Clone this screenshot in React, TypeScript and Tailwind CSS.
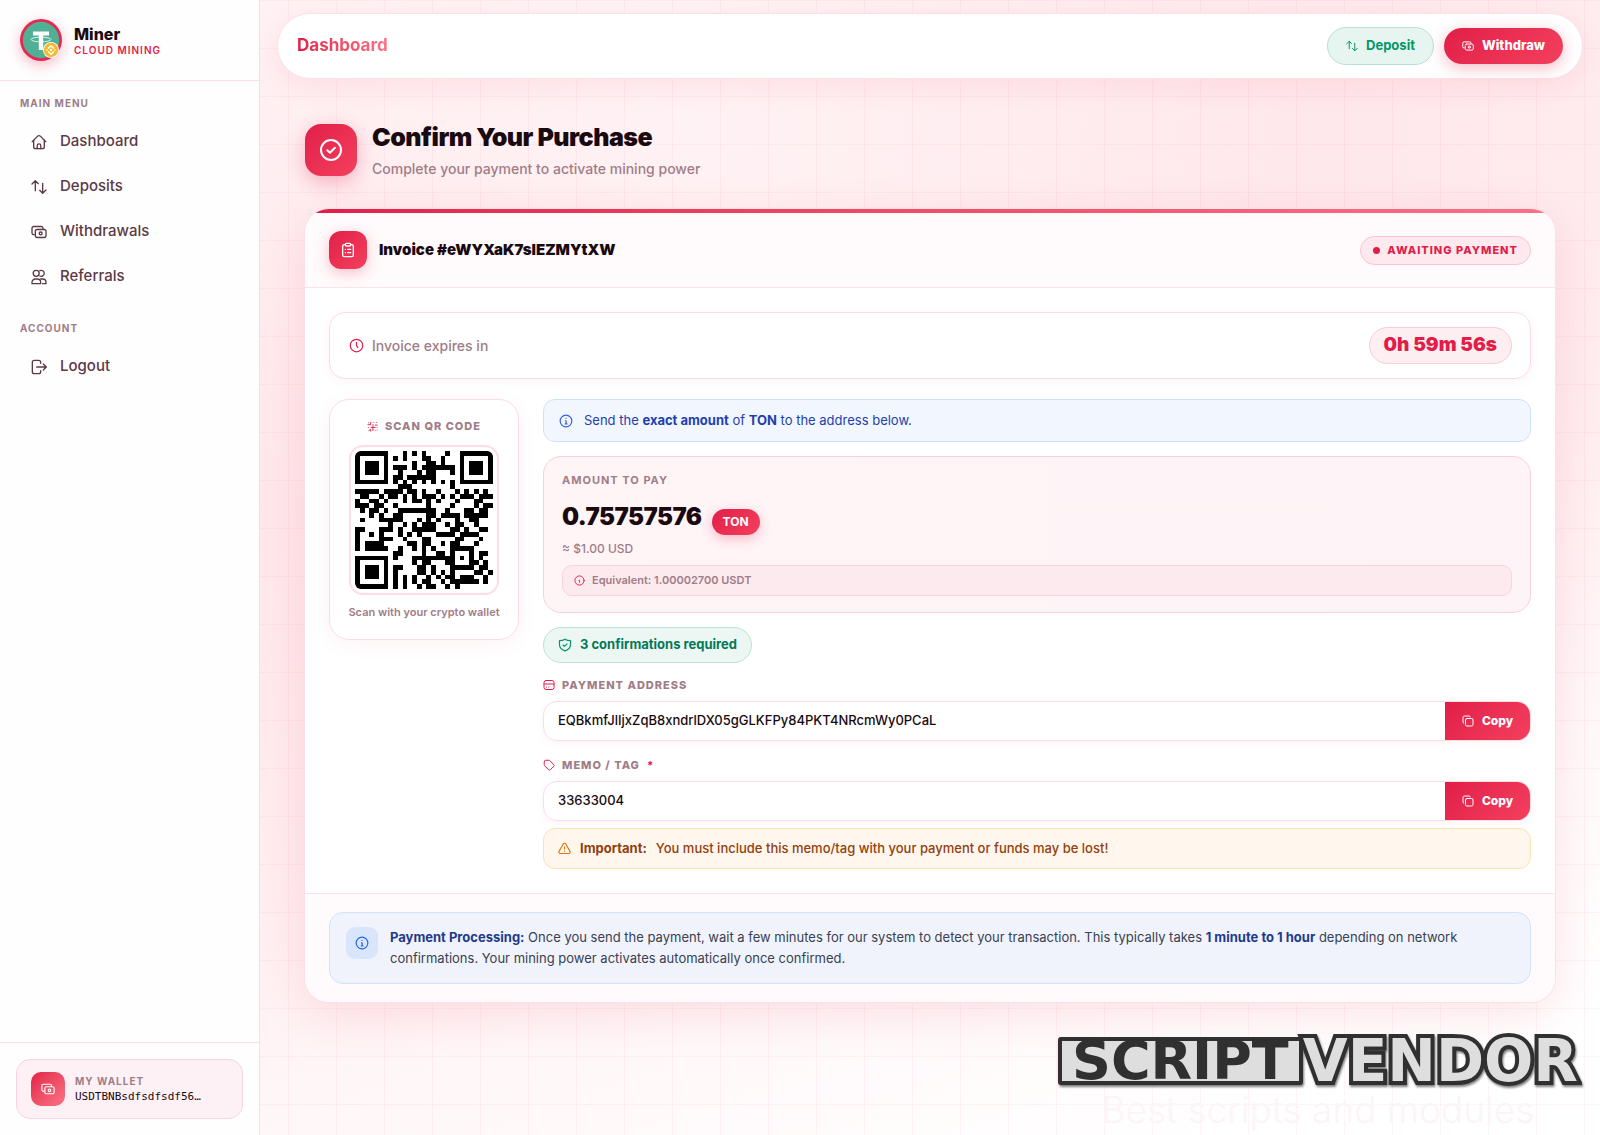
import type { ReactNode, SVGProps } from "react";

const ADDRESS = "EQBkmfJlIjxZqB8xndrlDX05gGLKFPy84PKT4NRcmWy0PCaL";
const MEMO = "33633004";

/* ---------- QR code (version 3, level L, byte mode) ---------- */
const SIZE = 29;
const DATA_WORDS = 55;
const EC_WORDS = 15;

function gfMul(a: number, b: number): number {
  let r = 0;
  for (let i = 7; i >= 0; i--) {
    r = (r << 1) ^ ((r >>> 7) * 0x11d);
    r ^= ((b >>> i) & 1) * a;
  }
  return r;
}

function errorWords(data: number[]): number[] {
  const gen: number[] = new Array(EC_WORDS).fill(0);
  gen[EC_WORDS - 1] = 1;
  let root = 1;
  for (let i = 0; i < EC_WORDS; i++) {
    for (let j = 0; j < EC_WORDS; j++) {
      gen[j] = gfMul(gen[j], root);
      if (j + 1 < EC_WORDS) gen[j] ^= gen[j + 1];
    }
    root = gfMul(root, 2);
  }
  const rem: number[] = new Array(EC_WORDS).fill(0);
  for (const b of data) {
    const f = b ^ (rem.shift() as number);
    rem.push(0);
    gen.forEach((g, i) => (rem[i] ^= gfMul(g, f)));
  }
  return rem;
}

// Mask pattern 2: every third column is inverted.
const MASK = 2;
const masked = (x: number) => x % 3 === 0;

function qrMatrix(text: string): boolean[][] {
  const bits: number[] = [];
  const put = (v: number, n: number) => {
    for (let i = n - 1; i >= 0; i--) bits.push((v >>> i) & 1);
  };
  put(4, 4);
  put(text.length, 8);
  for (const c of text) put(c.charCodeAt(0), 8);
  put(0, 4);
  const words: number[] = [];
  for (let i = 0; i < bits.length; i += 8) words.push(parseInt(bits.slice(i, i + 8).join(""), 2));
  for (let pad = 0xec; words.length < DATA_WORDS; pad ^= 0xec ^ 0x11) words.push(pad);
  const all = words.concat(errorWords(words));

  const m: boolean[][] = Array.from({ length: SIZE }, () => new Array(SIZE).fill(false));
  const fixed: boolean[][] = Array.from({ length: SIZE }, () => new Array(SIZE).fill(false));
  const set = (x: number, y: number, v: boolean) => {
    if (x < 0 || y < 0 || x >= SIZE || y >= SIZE) return;
    m[y][x] = v;
    fixed[y][x] = true;
  };
  for (let i = 0; i < SIZE; i++) {
    set(6, i, i % 2 === 0);
    set(i, 6, i % 2 === 0);
  }
  for (const [cx, cy] of [[3, 3], [SIZE - 4, 3], [3, SIZE - 4]])
    for (let dy = -4; dy <= 4; dy++)
      for (let dx = -4; dx <= 4; dx++) {
        const d = Math.max(Math.abs(dx), Math.abs(dy));
        set(cx + dx, cy + dy, d !== 2 && d !== 4);
      }
  for (let dy = -2; dy <= 2; dy++)
    for (let dx = -2; dx <= 2; dx++) set(22 + dx, 22 + dy, Math.max(Math.abs(dx), Math.abs(dy)) !== 1);

  const fmt = (1 << 3) | MASK;
  let rem = fmt;
  for (let i = 0; i < 10; i++) rem = (rem << 1) ^ ((rem >>> 9) * 0x537);
  const f = ((fmt << 10) | rem) ^ 0x5412;
  const bit = (i: number) => ((f >>> i) & 1) === 1;
  for (let i = 0; i <= 5; i++) set(8, i, bit(i));
  set(8, 7, bit(6));
  set(8, 8, bit(7));
  set(7, 8, bit(8));
  for (let i = 9; i < 15; i++) set(14 - i, 8, bit(i));
  for (let i = 0; i < 8; i++) set(SIZE - 1 - i, 8, bit(i));
  for (let i = 8; i < 15; i++) set(8, SIZE - 15 + i, bit(i));
  set(8, SIZE - 8, true);

  let k = 0;
  for (let right = SIZE - 1; right >= 1; right -= 2) {
    if (right === 6) right = 5;
    for (let v = 0; v < SIZE; v++)
      for (let j = 0; j < 2; j++) {
        const x = right - j;
        const y = ((right + 1) & 2) === 0 ? SIZE - 1 - v : v;
        if (fixed[y][x]) continue;
        const b = k < all.length * 8 ? ((all[k >>> 3] >>> (7 - (k & 7))) & 1) === 1 : false;
        m[y][x] = b !== masked(x);
        k++;
      }
  }
  return m;
}

function QrCode({ text }: { text: string }) {
  const d = qrMatrix(text)
    .flatMap((row, y) => row.map((on, x) => (on ? `M${x} ${y}h1v1h-1z` : "")))
    .join("");
  return (
    <svg viewBox="0 0 29 29" className="block w-full rounded-md" role="img" aria-label="Payment QR code" shapeRendering="crispEdges">
      <path d={d} fill="#000" />
    </svg>
  );
}

/* ---------- Icons ---------- */
type IconProps = SVGProps<SVGSVGElement>;
function Icon({ children, ...p }: IconProps & { children: ReactNode }) {
  return (
    <svg viewBox="0 0 24 24" fill="none" stroke="currentColor" strokeWidth={2} strokeLinecap="round" strokeLinejoin="round" aria-hidden="true" {...p}>
      {children}
    </svg>
  );
}
const HomeIcon = (p: IconProps) => (
  <Icon {...p}>
    <path d="M1.8 11.5 10 3.2a2.8 2.8 0 0 1 4 0l8.2 8.3" />
    <path d="M4 9.5V19a3 3 0 0 0 3 3h10a3 3 0 0 0 3-3V9.500" />
    <path d="M9.300 22v-4.500a2.700 2.700 0 0 1 5.400 0V22" />
  </Icon>
);
const ArrowsIcon = (p: IconProps) => (
  <Icon {...p}>
    <path d="M6.500 17.500V3M1.500 7.500l5-5 4.500 4.500" />
    <path d="M17.500 6.500V21M13 17l4.500 4.500 5-5" />
  </Icon>
);
const CashIcon = (p: IconProps) => (
  <Icon {...p}>
    <path d="M5 16H4.500A2.700 2.700 0 0 1 1.500 13.300V6.500A2.700 2.700 0 0 1 4.200 3.800h11.100A2.700 2.700 0 0 1 18 6.500V7" />
    <rect x="6.500" y="8.200" width="16" height="12" rx="2.800" />
    <circle cx="14.500" cy="14.200" r="2.200" />
  </Icon>
);
const UsersIcon = (p: IconProps) => (
  <Icon {...p}>
    <circle cx="7.800" cy="6.500" r="4.500" />
    <path d="M13.300 2.500a4.500 4.500 0 1 1 0 8" />
    <path d="M1.500 22v-2a5 5 0 0 1 5-5h3a5 5 0 0 1 5 5v2z" />
    <path d="M14.500 15h3a5 5 0 0 1 5 5v2h-5" />
  </Icon>
);
const LogoutIcon = (p: IconProps) => (
  <Icon {...p}>
    <path d="M14.500 6.500V5a3 3 0 0 0-3-3H5a3 3 0 0 0-3 3v14a3 3 0 0 0 3 3h6.500a3 3 0 0 0 3-3v-1.500" />
    <path d="M8.500 12H23M18.500 7.500 23 12l-4.500 4.500" />
  </Icon>
);
const CheckCircleIcon = (p: IconProps) => (
  <Icon {...p}>
    <circle cx="12" cy="12" r="10" />
    <path d="m8.300 12.200 2.600 2.600 5-5" />
  </Icon>
);
const ClipboardIcon = (p: IconProps) => (
  <Icon {...p}>
    <path d="M8 4H6.500A2.500 2.500 0 0 0 4 6.500v13A2.500 2.500 0 0 0 6.500 22h11a2.500 2.500 0 0 0 2.500-2.500v-13A2.500 2.500 0 0 0 17.500 4H16" />
    <rect x="8" y="2" width="8" height="4" rx="1.500" />
    <path d="M8 11h.1M8 16h.1M11.500 11H16M11.500 16H16" />
  </Icon>
);
const ClockIcon = (p: IconProps) => (
  <Icon {...p}>
    <circle cx="12" cy="12" r="10" />
    <path d="M12 7v5l2 3" />
  </Icon>
);
const InfoIcon = (p: IconProps) => (
  <Icon {...p}>
    <circle cx="12" cy="12" r="10" />
    <path d="M11 11.500h1.200V17M10.800 17h2.800M12 7.500v.1" />
  </Icon>
);
const InfoSmallIcon = (p: IconProps) => (
  <Icon {...p}>
    <circle cx="12" cy="12" r="10" />
    <path d="M11 11.500h1.200V16" />
  </Icon>
);
const ScanIcon = (p: IconProps) => (
  <Icon {...p}>
    <path d="M3 4h.1M8 3v5H2M15 3v.1M21 3v.1M13 8v13M9 14h9M18 9h4M3 14v.1M4 21l4-3v4M18 20v.1M22 20v.1M22 14v.1" />
  </Icon>
);
const ShieldIcon = (p: IconProps) => (
  <Icon {...p}>
    <path d="M12 2c2.500 1.600 5.500 2.600 9.500 2.600V11c0 5.500-4 9-9.500 11-5.500-2-9.500-5.500-9.500-11V4.600C6.500 4.600 9.500 3.600 12 2z" />
    <path d="m8.500 12 2.500 2.500 4.500-4.500" />
  </Icon>
);
const CardIcon = (p: IconProps) => (
  <Icon {...p}>
    <rect x="2" y="3" width="20" height="18" rx="4" />
    <path d="M2 10h20M7 16h.1M11.500 16h.1" />
  </Icon>
);
const TagIcon = (p: IconProps) => (
  <Icon {...p}>
    <path d="M2.500 5.500a3 3 0 0 1 3-3h6.200a3 3 0 0 1 2.100.9l7.300 7.400a3 3 0 0 1 0 4.200l-6 6.100a3 3 0 0 1-4.300 0l-7.400-7.500a3 3 0 0 1-.9-2.100z" />
  </Icon>
);
const CopyIcon = (p: IconProps) => (
  <Icon {...p}>
    <rect x="7" y="7" width="15" height="15" rx="3" />
    <path d="M3.500 16.500A2.500 2.500 0 0 1 2 14V5a3 3 0 0 1 3-3h9a2.500 2.500 0 0 1 2.500 1.500" />
  </Icon>
);
const WarnIcon = (p: IconProps) => (
  <Icon {...p}>
    <path d="M9.700 3.500a2.700 2.700 0 0 1 4.600 0l7.800 13.800a2.600 2.600 0 0 1-2.300 3.900H4.200a2.600 2.600 0 0 1-2.300-3.900z" />
    <path d="M12 9v4M12 16.800v.1" />
  </Icon>
);

function BrandLogo() {
  return (
    <span className="rounded-full shadow-[0_4px_14px_rgba(225,29,72,0.3)]">
      <svg viewBox="0 0 42 42" className="block size-[42px]" aria-hidden="true">
        <circle cx="21" cy="21" r="21" fill="#e8274f" />
        <circle cx="21" cy="21" r="18.200" fill="#50af95" />
        <path d="M13 12.500h16v4h-5.800V31h-4.400V16.500H13z" fill="#fff" />
        <ellipse cx="21" cy="20.500" rx="10" ry="2.300" fill="none" stroke="#fff" strokeWidth="0.800" />
        <circle cx="31" cy="31" r="8" fill="#fff" />
        <circle cx="31" cy="31" r="7.200" fill="#f3ba2f" />
        <path d="M28 29.500 31 26.800l3 2.700M28 32.500l3 2.700 3-2.700" fill="none" stroke="#fff" strokeWidth="1.400" />
        <path d="m31 29.400 1.600 1.600-1.600 1.600-1.600-1.600zM27 30l1 1-1 1-1-1zM35 30l1 1-1 1-1-1z" fill="#fff" />
      </svg>
    </span>
  );
}

/* ---------- Pieces ---------- */
function NavItem({ icon, label }: { icon: ReactNode; label: string }) {
  return (
    <a href="#" className="flex h-[45px] items-center gap-[13px] pl-[31px] text-[15px] font-medium text-[#5b3a45]">
      {icon}
      {label}
    </a>
  );
}

function SectionLabel({ children }: { children: ReactNode }) {
  return <h2 className="px-5 text-[10px] leading-4 font-bold tracking-[1px] text-[#9f7d87]">{children}</h2>;
}

function CopyField({ id, value }: { id: string; value: string }) {
  return (
    <div className="flex h-10 overflow-hidden rounded-[14px] border border-[#fcdde4] bg-white shadow-[0_2px_8px_rgba(225,29,72,0.06)]">
      <input id={id} readOnly value={value} className="min-w-0 flex-1 bg-transparent px-[14px] text-[13px] font-medium text-[#1a0a10] outline-none" />
      <button type="button" className="flex w-[85px] items-center justify-center gap-2 bg-linear-135 from-[#e11d48] to-[#f43f5e] text-[12px] font-extrabold text-white">
        <CopyIcon className="size-3" />
        Copy
      </button>
    </div>
  );
}

const labelClass = "flex items-center gap-[7px] text-[11px] leading-4 font-extrabold tracking-[1px] text-[#9f7d87]";

function Sidebar() {
  return (
    <aside className="flex w-[260px] shrink-0 flex-col border-r border-[#fbdde4] bg-[#fefefe]">
      <div className="flex h-[81px] items-center gap-3 border-b border-[#fcdfe6] px-5">
        <BrandLogo />
        <div>
          <div className="text-[16px] leading-5 font-extrabold text-[#1a0a10]">Miner</div>
          <div className="text-[10px] leading-3 font-semibold tracking-[1px] text-[#e11d48]">CLOUD MINING</div>
        </div>
      </div>
      <nav className="flex-1 pt-[14px]">
        <SectionLabel>MAIN MENU</SectionLabel>
        <div className="pt-2 pb-[21px]">
          <NavItem icon={<HomeIcon className="size-4" />} label="Dashboard" />
          <NavItem icon={<ArrowsIcon className="size-4" />} label="Deposits" />
          <NavItem icon={<CashIcon className="size-4" />} label="Withdrawals" />
          <NavItem icon={<UsersIcon className="size-4" />} label="Referrals" />
        </div>
        <SectionLabel>ACCOUNT</SectionLabel>
        <div className="pt-2">
          <NavItem icon={<LogoutIcon className="size-4" />} label="Logout" />
        </div>
      </nav>
      <div className="border-t border-[#fcdfe6] p-4">
        <div className="flex h-[60px] items-center gap-[10px] rounded-[14px] border border-[#fad3de] bg-[#fdf1f5] px-[14px]">
          <span className="flex size-[34px] items-center justify-center rounded-[10px] bg-linear-135 from-[#e11d48] to-[#fb7185] text-white">
            <CashIcon className="size-[14px]" />
          </span>
          <div>
            <div className="text-[10px] leading-[15px] font-bold tracking-[1px] text-[#9f7d87]">MY WALLET</div>
            <div className="font-['DejaVu_Sans_Mono',monospace] text-[11px] leading-[15px] text-[#1a0a10]">USDTBNBsdfsdfsdf56…</div>
          </div>
        </div>
      </div>
    </aside>
  );
}

function Topbar() {
  return (
    <header className="mx-[17px] mt-[13px] flex h-[66px] items-center justify-between rounded-full border border-[#fce0e6] bg-white px-[19px] shadow-[0_8px_30px_rgba(225,29,72,0.08)]">
      <h1 className="bg-linear-90 from-[#e11d48] to-[#fb7185] bg-clip-text text-[17px] font-bold text-transparent">Dashboard</h1>
      <div className="flex items-center gap-[10px]">
        <a href="#" className="flex h-[38px] items-center gap-2 rounded-full border border-[#b5e2d0] bg-[#e7f5f0] px-[18px] text-[13px] font-bold text-[#059669]">
          <ArrowsIcon className="size-3" />
          Deposit
        </a>
        <a href="#" className="flex h-9 items-center gap-2 rounded-full bg-linear-135 from-[#e11d48] to-[#f43f5e] px-[18px] text-[13px] font-extrabold text-white shadow-[0_4px_16px_rgba(225,29,72,0.3)]">
          <CashIcon className="size-3" />
          Withdraw
        </a>
      </div>
    </header>
  );
}

function QrCard() {
  return (
    <section className="flex h-[241px] w-[190px] shrink-0 flex-col items-center rounded-[20px] border border-[#fcdde4] bg-white pt-[18px] shadow-[0_4px_20px_rgba(225,29,72,0.06)]">
      <h3 className={labelClass}>
        <ScanIcon className="size-[11px] text-[#e11d48]" />
        SCAN QR CODE
      </h3>
      <div className="mt-[11px] w-[150px] rounded-[14px] border-2 border-[#fcdde4] bg-white p-[4px]">
        <QrCode text={ADDRESS} />
      </div>
      <p className="pt-[9px] text-[11px] leading-4 font-semibold text-[#9f7d87]">Scan with your crypto wallet</p>
    </section>
  );
}

function AmountCard() {
  return (
    <section className="mt-[14px] rounded-[18px] border border-[#fad0da] bg-linear-90 from-[#fff4f6] to-[#fef4f7] px-[18px] pt-[15px] pb-4">
      <h3 className="text-[11px] leading-4 font-bold tracking-[1px] text-[#9f7d87]">AMOUNT TO PAY</h3>
      <div className="flex h-[47px] items-end gap-[10px]">
        <span className="text-[24px] leading-9 font-black tracking-[-0.500px] text-[#1a0a10]">0.75757576</span>
        <span className="flex h-[26px] items-center rounded-full bg-linear-135 from-[#e11d48] to-[#f43f5e] px-[11px] text-[12px] font-bold text-white shadow-[0_4px_12px_rgba(225,29,72,0.25)]">TON</span>
      </div>
      <p className="pt-1 text-[12px] leading-5 font-medium text-[#9f7d87]">≈ $1.00 USD</p>
      <div className="mt-[6px] flex h-[31px] items-center gap-[7px] rounded-[10px] border border-[#fad3dc] bg-[#fdeaee] px-[11px] text-[11px] font-semibold text-[#9f7d87]">
        <InfoSmallIcon className="size-[11px] text-[#e11d48]" />
        Equivalent: 1.00002700 USDT
      </div>
    </section>
  );
}

function InvoiceCard() {
  return (
    <article className="mt-[33px] overflow-hidden rounded-3xl bg-white shadow-[0_12px_48px_rgba(225,29,72,0.12)] ring-1 ring-[#fbe1e7]">
      <div className="h-1 bg-linear-90 from-[#e11d48] to-[#fb7185]" />
      <header className="flex h-[75px] items-center justify-between border-b border-[#fce3e9] bg-[#fffafb] px-6">
        <div className="flex items-center gap-3">
          <span className="flex size-[38px] items-center justify-center rounded-[12px] bg-linear-135 from-[#e11d48] to-[#f43f5e] text-white shadow-[0_4px_14px_rgba(225,29,72,0.25)]">
            <ClipboardIcon className="size-4" />
          </span>
          <h2 className="text-[15px] font-black text-[#1a0a10]">Invoice #eWYXaK7sIEZMYtXW</h2>
        </div>
        <span className="flex h-[29px] items-center gap-[7px] rounded-full border border-[#f8c4d0] bg-[#fde9ee] px-3 text-[11px] font-extrabold tracking-[1px] text-[#e11d48]">
          <i className="size-[7px] rounded-full bg-[#e11d48]" />
          AWAITING PAYMENT
        </span>
      </header>

      <div className="p-6">
        <div className="flex h-[67px] items-center justify-between rounded-[16px] border border-[#fcdde4] bg-white pr-[18px] pl-[19px] shadow-[0_2px_12px_rgba(225,29,72,0.05)]">
          <span className="flex items-center gap-2 text-[14px] font-medium text-[#9f7d87]">
            <ClockIcon className="size-[15px] text-[#e11d48]" />
            Invoice expires in
          </span>
          <time className="flex h-[37px] items-center rounded-full border border-[#f9ccd6] bg-[#fdeef1] px-[14px] text-[19px] font-black text-[#e11d48]">0h 59m 56s</time>
        </div>

        <div className="flex items-start gap-6 pt-5">
          <QrCard />
          <div className="min-w-0 flex-1">
            <p className="flex h-[43px] items-center gap-[11px] rounded-[12px] border border-[#cfe0fb] bg-[#f2f7ff] px-[15px] text-[13px] text-[#1e40af]">
              <InfoIcon className="size-[14px] text-[#2f5fe0]" />
              <span>
                Send the <b>exact amount</b> of <b>TON</b> to the address below.
              </span>
            </p>
            <AmountCard />
            <div className="mt-[14px] flex">
              <span className="flex h-9 items-center gap-2 rounded-full border border-[#b9e4d3] bg-[#ecf7f3] px-[14px] text-[13px] font-bold text-[#047857]">
                <ShieldIcon className="size-[14px] text-[#059669]" />
                3 confirmations required
              </span>
            </div>
            <label htmlFor="address" className={`${labelClass} mt-[14px] mb-2`}>
              <CardIcon className="size-[12px] text-[#e11d48]" />
              PAYMENT ADDRESS
            </label>
            <CopyField id="address" value={ADDRESS} />
            <label htmlFor="memo" className={`${labelClass} mt-4 mb-2`}>
              <TagIcon className="size-[12px] text-[#e11d48]" />
              MEMO / TAG <span className="text-[#e11d48]">*</span>
            </label>
            <CopyField id="memo" value={MEMO} />
            <p className="mt-[7px] flex h-[41px] items-center gap-[9px] rounded-[12px] border border-[#fde0b0] bg-[#fff7ed] px-[14px] text-[13px] font-medium text-[#92400e]">
              <WarnIcon className="size-[13px] text-[#d97706]" />
              <b>Important:</b>
              You must include this memo/tag with your payment or funds may be lost!
            </p>
          </div>
        </div>
      </div>

      <footer className="border-t border-[#fce3e9] bg-[#fffafb] px-6 py-[18px]">
        <div className="flex items-start gap-3 rounded-[14px] border border-[#d3e0fa] bg-[#f1f3fc] px-4 py-[14px]">
          <span className="flex size-8 shrink-0 items-center justify-center rounded-[9px] bg-[#d9e5fa] text-[#2563eb]">
            <InfoIcon className="size-[14px]" />
          </span>
          <p className="text-[13px] leading-[21px] text-[#374151]">
            <b className="text-[#1e3a8a]">Payment Processing:</b> Once you send the payment, wait a few minutes for our system to detect your transaction. This typically takes{" "}
            <b className="text-[#1e3a8a]">1 minute to 1 hour</b> depending on network confirmations. Your mining power activates automatically once confirmed.
          </p>
        </div>
      </footer>
    </article>
  );
}

function Watermark() {
  return (
    <div className="pointer-events-none absolute right-[22px] bottom-0 flex flex-col items-center" aria-hidden="true">
      <div className="flex items-center font-['DejaVu_Sans',sans-serif] font-bold drop-shadow-[1px_2px_1px_rgba(0,0,0,0.5)]">
        <span className="z-10 flex h-12 w-[245px] items-center justify-center rounded-[3px] border-4 border-[#303030] bg-[#dedede] text-[54px] leading-10 text-[#303030]">SCRIPT</span>
        <span className="text-[58px] leading-12 text-[#dedede] [-webkit-text-stroke:8px_#303030] [paint-order:stroke_fill]">VENDOR</span>
      </div>
      <div className="text-[37px] leading-[50px] font-light text-[#fcf5f7]">Best scripts and modules</div>
    </div>
  );
}

export default function App() {
  return (
    <div className="relative flex min-h-screen bg-[#fff1f3] font-[Inter,sans-serif]">
      <Sidebar />
      <main className="relative min-w-0 flex-1 bg-[linear-gradient(rgba(244,63,94,0.05)_1px,transparent_1px),linear-gradient(90deg,rgba(244,63,94,0.05)_1px,transparent_1px),radial-gradient(circle_at_80%_12%,rgba(244,63,94,0.06),transparent_45%),radial-gradient(circle_at_0%_45%,rgba(244,63,94,0.06),transparent_40%),linear-gradient(160deg,#fff3f5_0%,#fff1f3_55%,#ffffff_92%)] bg-[size:48px_48px,48px_48px,auto,auto,auto] bg-[position:0_0,28px_0,0_0,0_0,0_0]">
        <Topbar />
        <div className="px-[45px] pt-[45px]">
          <div className="flex h-[52px] items-center gap-[15px]">
            <span className="flex size-[52px] items-center justify-center rounded-[16px] bg-linear-135 from-[#e11d48] to-[#f43f5e] text-white shadow-[0_6px_20px_rgba(225,29,72,0.3)]">
              <CheckCircleIcon className="size-6" />
            </span>
            <div>
              <h2 className="text-[25px] leading-8 font-black tracking-[-0.500px] text-[#1a0a10]">Confirm Your Purchase</h2>
              <p className="pt-[6px] text-[14px] leading-5 font-medium text-[#9f7d87]">Complete your payment to activate mining power</p>
            </div>
          </div>
          <InvoiceCard />
        </div>
        <Watermark />
      </main>
    </div>
  );
}
